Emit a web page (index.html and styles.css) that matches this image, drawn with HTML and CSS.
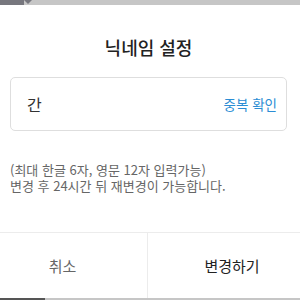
FILE: index.html
```html
<!DOCTYPE html>
<html lang="ko">

<head>
    <meta charset="UTF-8">
    <title>닉네임 설정</title>
    <link rel="stylesheet" href="styles.css">
</head>

<body>
    <div class="topbar">
        <span class="app"></span>
        <span class="caret"></span>
    </div>

    <div class="dialog">
        <h2 class="title">닉네임 설정</h2>

        <div class="field">
            <span class="value">간</span>
            <button class="check" type="button">중복 확인</button>
        </div>

        <p class="help">
            <span class="line">(최대 한글 6자, 영문 12자 입력가능)</span>
            <span class="line">변경 후 24시간 뒤 재변경이 가능합니다.</span>
        </p>

        <div class="actions">
            <button class="cancel" type="button">취소</button>
            <button class="confirm" type="button">변경하기</button>
        </div>
    </div>

    <div class="bottombar">
        <span class="peek"></span>
    </div>
</body>

</html>
```

FILE: styles.css
```css
body {
    margin: 0;
    width: 300px;
    height: 300px;
    overflow: hidden;
    background: #c6c6c6;
    font-family: "Noto Sans CJK KR", "Noto Sans", sans-serif;
}

.topbar {
    display: flex;
    height: 5px;
}

.topbar .app {
    width: 24px;
    background: #77777e;
}

.topbar .caret {
    width: 0;
    height: 0;
    border-left: 4px solid transparent;
    border-right: 4px solid transparent;
    border-top: 4px solid #77777e;
}

.dialog {
    display: flex;
    flex-direction: column;
    height: 293px;
    padding: 0 13px 0 10px;
    background: #fff;
}

.title {
    margin: 29px 0 0;
    font-size: 18px;
    line-height: 26px;
    font-weight: 500;
    text-align: center;
    color: #222;
}

.field {
    display: flex;
    align-items: center;
    justify-content: space-between;
    height: 54px;
    margin-top: 17px;
    padding: 0 9px 0 16px;
    box-sizing: border-box;
    border: 1px solid #dedede;
    border-radius: 5px;
}

.field .value {
    font-size: 16px;
    color: #333;
}

.check {
    padding: 0;
    border: none;
    background: none;
    font-family: inherit;
    font-size: 13.5px;
    color: #2b8dd4;
}

.help {
    margin: 31px 0 0;
    font-size: 13px;
    line-height: 16px;
    color: #666;
}

.help .line {
    display: block;
}

.actions {
    display: grid;
    grid-template-columns: 148px 1fr;
    height: 65px;
    margin: auto -13px 0 -10px;
    border-top: 1px solid #ececec;
}

.actions button {
    border: none;
    background: #fff;
    font-family: inherit;
    font-size: 15px;
}

.cancel {
    padding: 0 22px 0 0;
    border-right: 1px solid #ececec !important;
    color: #666;
}

.confirm {
    padding: 0 0 0 16px;
    color: #222;
}

.bottombar {
    height: 2px;
}

.bottombar .peek {
    display: block;
    width: 45px;
    height: 2px;
    background: #555;
}
```
